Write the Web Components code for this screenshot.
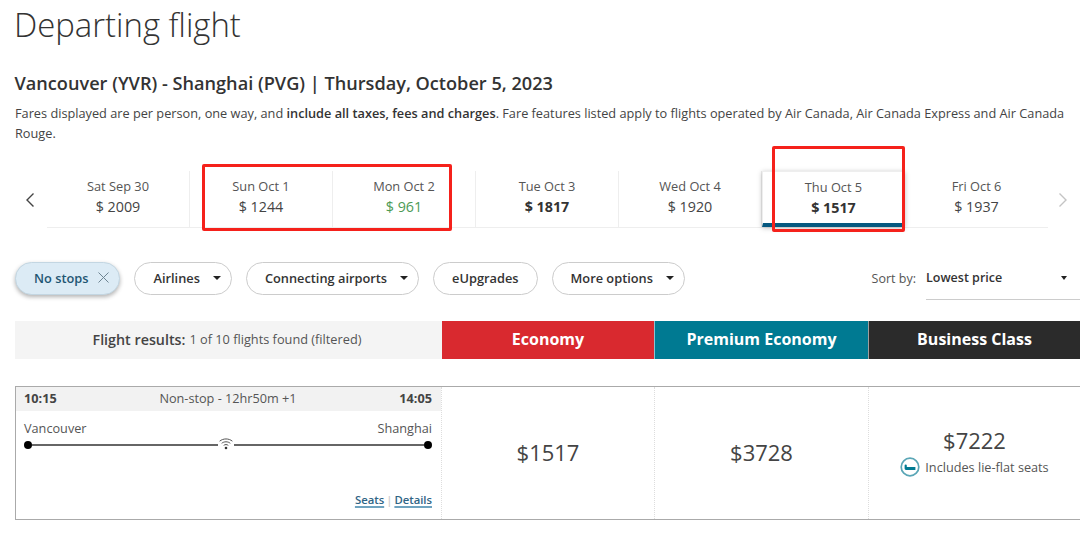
<!DOCTYPE html>
<html lang="en">
<head>
<meta charset="utf-8">
<title>Departing flight</title>
<style>
  html, body { margin: 0; padding: 0; background: #fff; overflow: hidden; }
  body { font-family: "Open Sans", "Liberation Sans", sans-serif; color: #333; width: 1080px; height: 541px; }
</style>
</head>
<body>
<flight-page></flight-page>

<script>
class FareDate extends HTMLElement {
  constructor() {
    super();
    this.attachShadow({ mode: 'open' });
  }

  connectedCallback() {
    const price = this.getAttribute('price');
    this.shadowRoot.innerHTML = `
      <style>
        :host {
          display: flex;
          flex-direction: column;
          align-items: center;
          width: 143px;
          height: 56px;
          box-sizing: border-box;
          padding-top: 6px;
          border-right: 1px solid #eee;
          color: #444;
        }
        :host([last]) { border-right: none; }
        :host([selected]) {
          border: 1px solid #eee;
          border-bottom: 4px solid #06587f;
          padding-top: 6px;
          box-shadow: 0 1px 5px rgba(0, 0, 0, 0.25);
          position: relative;
        }
        .day { font-size: 12.800px; line-height: 19px; color: #555; }
        .price { font-size: 14.300px; line-height: 22px; }
        :host([low]) .price { color: #4c9a54; }
        :host([strong]) .price { font-weight: 700; color: #333; }
      </style>
      <div class="day">${this.getAttribute('day')}</div>
      <div class="price">$ ${price}</div>
    `;
  }
}
customElements.define('fare-date', FareDate);

class DateStrip extends HTMLElement {
  constructor() {
    super();
    this.attachShadow({ mode: 'open' });
    this.shadowRoot.innerHTML = `
      <style>
        :host { display: block; position: relative; height: 56px; margin-top: 28px; }
        .row { display: flex; align-items: stretch; }
        .arrow { width: 22px; display: flex; align-items: center; padding-left: 25px; }
        .arrow.next { width: auto; padding-left: 10px; }
        .cells { display: flex; border-bottom: 1px solid #eee; height: 56px; }
        .mark {
          position: absolute;
          border: 3px solid #f5211b;
          border-radius: 2px;
          box-sizing: border-box;
          pointer-events: none;
        }
      </style>
      <div class="row">
        <div class="arrow">
          <svg width="10" height="16" viewBox="0 0 10 16"><path d="M8.500 1.500 L2 8 L8.500 14.500" fill="none" stroke="#444" stroke-width="1.400"/></svg>
        </div>
        <div class="cells"><slot></slot></div>
        <div class="arrow next">
          <svg width="10" height="16" viewBox="0 0 10 16"><path d="M1.500 1.500 L8 8 L1.500 14.500" fill="none" stroke="#c4c4c4" stroke-width="1.400"/></svg>
        </div>
      </div>
      <div class="mark" style="left:202px;top:-7px;width:250px;height:67px"></div>
      <div class="mark" style="left:772px;top:-25px;width:133px;height:86px"></div>
    `;
  }
}
customElements.define('date-strip', DateStrip);

class FilterChip extends HTMLElement {
  constructor() {
    super();
    this.attachShadow({ mode: 'open' });
    this.shadowRoot.innerHTML = `
      <style>
        :host {
          display: inline-flex;
          align-items: center;
          box-sizing: border-box;
          height: 33px;
          padding: 0 18px 2px;
          gap: 13px;
          border: 1px solid #ccc;
          border-radius: 17px;
          background: #fff;
          font-size: 12.800px;
          font-weight: 600;
          color: #333;
          white-space: nowrap;
        }
        :host([caret]) { padding-right: 10px; }
        :host([active]) {
          background: #dcebf5;
          border-color: #c3d6e2;
          box-shadow: 0 2px 4px rgba(0, 0, 0, 0.3);
          color: #1f5673;
          padding: 0 10px 2px 18px;
          gap: 10px;
        }
        .caret { width: 0; height: 0; border: 4px solid transparent; border-top: 4px solid #222; border-bottom: none; }
        svg { display: block; }
      </style>
      <slot></slot>
      ${this.hasAttribute('caret') ? '<span class="caret"></span>' : ''}
      ${this.hasAttribute('active') ? '<svg width="11" height="11" viewBox="0 0 11 11"><path d="M.5.5 L10.500 10.500 M10.500.5 L.5 10.500" stroke="#6d8492" stroke-width="1"/></svg>' : ''}
    `;
  }
}
customElements.define('filter-chip', FilterChip);

class SortBox extends HTMLElement {
  constructor() {
    super();
    this.attachShadow({ mode: 'open' });
    this.shadowRoot.innerHTML = `
      <style>
        :host { display: flex; align-items: center; gap: 10px; font-size: 12.500px; margin-left: auto; }
        .label { color: #555; }
        .select {
          width: 154px;
          height: 39px;
          box-sizing: border-box;
          padding: 0 13px 5px 0;
          border-bottom: 1px solid #ccc;
          display: flex;
          align-items: center;
          justify-content: space-between;
          font-weight: 600;
          color: #333;
          margin-top: 4px;
        }
        .caret { width: 0; height: 0; border: 3.500px solid transparent; border-top: 4px solid #222; border-bottom: none; }
      </style>
      <span class="label">Sort by:</span>
      <div class="select"><span>Lowest price</span><span class="caret"></span></div>
    `;
  }
}
customElements.define('sort-box', SortBox);

class CabinHead extends HTMLElement {
  constructor() {
    super();
    this.attachShadow({ mode: 'open' });
    this.shadowRoot.innerHTML = `
      <style>
        :host {
          display: flex;
          align-items: center;
          justify-content: center;
          height: 38px;
          padding-bottom: 2px;
          color: #fff;
          font-size: 16px;
          font-weight: 700;
          box-sizing: border-box;
        }
        :host([divided]) { border-left: 1px solid rgba(255, 255, 255, 0.55); }
      </style>
      <slot></slot>
    `;
  }
}
customElements.define('cabin-head', CabinHead);

class FlightCard extends HTMLElement {
  constructor() {
    super();
    this.attachShadow({ mode: 'open' });
    this.shadowRoot.innerHTML = `
      <style>
        :host { display: block; font-size: 12.700px; color: #555; height: 100%; box-sizing: border-box; }
        .top {
          display: flex;
          justify-content: space-between;
          align-items: center;
          height: 24px;
          box-sizing: border-box;
          padding: 0 9px 2px 8px;
          background: #f2f2f2;
        }
        .top b { color: #444; font-weight: 700; }
        .body { padding: 7px 9px 0 8px; }
        .cities { display: flex; justify-content: space-between; line-height: 20px; }
        .line { display: flex; align-items: center; height: 14px; }
        .dot { width: 8px; height: 8px; border-radius: 50%; background: #000; flex: none; }
        .rule { height: 2px; background: #666; }
        .rule.a { flex: 187; }
        .rule.b { flex: 191; }
        .wifi { display: block; margin: 0 1px 2px; flex: none; }
        .links { display: flex; justify-content: flex-end; gap: 2px; margin-top: 40px; font-size: 11.300px; font-weight: 600; color: #ccc; }
        a {
          color: #2f6485;
          text-decoration: underline;
          text-decoration-color: #6fa3bf;
          text-decoration-thickness: 1.500px;
          text-underline-offset: 2px;
        }
      </style>
      <div class="top"><b>10:15</b><span>Non-stop - 12hr50m +1</span><b>14:05</b></div>
      <div class="body">
        <div class="cities"><span>Vancouver</span><span>Shanghai</span></div>
        <div class="line">
          <span class="dot"></span>
          <span class="rule a"></span>
          <svg class="wifi" width="14" height="12" viewBox="0 0 14 12" fill="none" stroke="#555">
            <path d="M.6 3.200 C4.200 .2 9.800 .2 13.400 3.200" stroke-width="1"/>
            <path d="M2.700 5.300 C5 3.300 9 3.300 11.300 5.300" stroke-width="1"/>
            <path d="M4.700 7.400 C6 6.300 8 6.300 9.300 7.400" stroke-width="1"/>
            <circle cx="7" cy="10" r="1.300" fill="#333" stroke="none"/>
          </svg>
          <span class="rule b"></span>
          <span class="dot"></span>
        </div>
        <div class="links"><a>Seats</a><span>|</span><a>Details</a></div>
      </div>
    `;
  }
}
customElements.define('flight-card', FlightCard);

class FareCell extends HTMLElement {
  constructor() {
    super();
    this.attachShadow({ mode: 'open' });
    this.shadowRoot.innerHTML = `
      <style>
        :host {
          display: flex;
          flex-direction: column;
          align-items: center;
          justify-content: center;
          padding-bottom: 2px;
          border-left: 1px dotted #ddd;
          color: #444;
        }
        .amount { font-size: 22px; line-height: 30px; }
      </style>
      <div class="amount">$${this.getAttribute('amount')}</div>
      <slot></slot>
    `;
  }
}
customElements.define('fare-cell', FareCell);

class LieFlat extends HTMLElement {
  constructor() {
    super();
    this.attachShadow({ mode: 'open' });
    this.shadowRoot.innerHTML = `
      <style>
        :host { display: flex; align-items: center; gap: 5px; font-size: 12.700px; color: #555; margin: 2px 0 2px; }
        svg { display: block; }
      </style>
      <svg width="20" height="20" viewBox="0 0 20 20">
        <circle cx="10" cy="10" r="8.800" fill="#fff" stroke="#5aa6b6" stroke-width="1.700"/>
        <path d="M4.600 8.500 Q4.600 7.400 5.700 7.400 Q6.800 7.400 6.800 8.500 V10 H15.400 V13 H6 Q4.600 13 4.600 11.600 Z" fill="#007a92"/>
      </svg>
      <span>Includes lie-flat seats</span>
    `;
  }
}
customElements.define('lie-flat', LieFlat);

class FlightPage extends HTMLElement {
  constructor() {
    super();
    this.attachShadow({ mode: 'open' });
    this.shadowRoot.innerHTML = `
      <style>
        :host { display: block; color: #333; }
        h1 { margin: 3px 0 0; padding: 0 0 0 14px; font-size: 32.900px; line-height: 44px; font-weight: 300; color: #333; height: 44px; }
        h2 { margin: 24px 0 0; padding-left: 14.500px; font-size: 18.150px; line-height: 24px; font-weight: 600; color: #333; }
        p { margin: 8px 0 0; padding: 0 0 0 15px; font-size: 12.740px; line-height: 20px; color: #444; }
        p b { font-weight: 600; color: #333; }
        .filters { display: flex; align-items: center; gap: 14px; padding-left: 15px; margin-top: 35px; height: 33px; }
        .heads { display: grid; grid-template-columns: 427px 212px 214px 212px; margin: 26px 0 0 15px; }
        .summary { display: flex; align-items: center; justify-content: center; gap: 4px; background: #f4f4f4; height: 38px; box-sizing: border-box; padding: 0 3px 2px 0; font-size: 12.750px; color: #555; }
        .summary b { font-size: 14.300px; font-weight: 600; color: #444; }
        .row {
          display: grid;
          grid-template-columns: 425px 213px 214px 212px;
          margin: 27px 0 0 15px;
          height: 134px;
          box-sizing: border-box;
          border: 1px solid #aaa;
          border-right: none;
        }
      </style>
      <h1>Departing flight</h1>
      <h2>Vancouver (YVR) - Shanghai (PVG) | Thursday, October 5, 2023</h2>
      <p>Fares displayed are per person, one way, and <b>include all taxes, fees and charges</b><span>. Fare features listed apply to flights operated by Air Canada, Air Canada Express and Air Canada</span> <span>Rouge.</span></p>
      <date-strip>
        <fare-date day="Sat Sep 30" price="2009"></fare-date>
        <fare-date day="Sun Oct 1" price="1244"></fare-date>
        <fare-date day="Mon Oct 2" price="961" low></fare-date>
        <fare-date day="Tue Oct 3" price="1817" strong></fare-date>
        <fare-date day="Wed Oct 4" price="1920"></fare-date>
        <fare-date day="Thu Oct 5" price="1517" strong selected></fare-date>
        <fare-date day="Fri Oct 6" price="1937" last></fare-date>
      </date-strip>
      <div class="filters">
        <filter-chip active>No stops</filter-chip>
        <filter-chip caret>Airlines</filter-chip>
        <filter-chip caret>Connecting airports</filter-chip>
        <filter-chip>eUpgrades</filter-chip>
        <filter-chip caret>More options</filter-chip>
        <sort-box></sort-box>
      </div>
      <div class="heads">
        <div class="summary"><b>Flight results:</b> 1 of 10 flights found (filtered)</div>
        <cabin-head style="background:#d9292f">Economy</cabin-head>
        <cabin-head divided style="background:#007a92">Premium Economy</cabin-head>
        <cabin-head divided style="background:#2b2b2b">Business Class</cabin-head>
      </div>
      <div class="row">
        <flight-card></flight-card>
        <fare-cell amount="1517"></fare-cell>
        <fare-cell amount="3728"></fare-cell>
        <fare-cell amount="7222"><lie-flat></lie-flat></fare-cell>
      </div>
    `;
  }
}
customElements.define('flight-page', FlightPage);
</script>
</body>
</html>
